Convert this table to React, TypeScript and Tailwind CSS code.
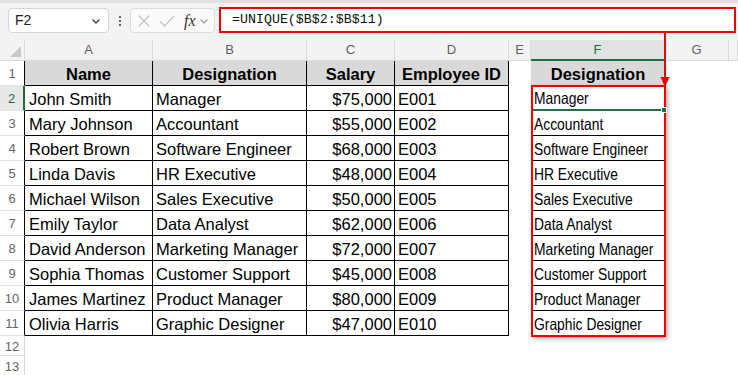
import React from "react";

const ROWS: [string, string, string, string][] = [
  ["John Smith", "Manager", "$75,000", "E001"],
  ["Mary Johnson", "Accountant", "$55,000", "E002"],
  ["Robert Brown", "Software Engineer", "$68,000", "E003"],
  ["Linda Davis", "HR Executive", "$48,000", "E004"],
  ["Michael Wilson", "Sales Executive", "$50,000", "E005"],
  ["Emily Taylor", "Data Analyst", "$62,000", "E006"],
  ["David Anderson", "Marketing Manager", "$72,000", "E007"],
  ["Sophia Thomas", "Customer Support", "$45,000", "E008"],
  ["James Martinez", "Product Manager", "$80,000", "E009"],
  ["Olivia Harris", "Graphic Designer", "$47,000", "E010"],
];

const COLS = "grid grid-cols-[25px_128px_154px_88px_114px_22px_134px_64px_1fr]";

function ColHeader({ label, active }: { label: string; active?: boolean }) {
  return (
    <div
      className={
        active
          ? "flex h-[21px] items-center justify-center border-b-2 border-r border-b-[#1e6e42] border-r-[#d4d4d4] bg-[#e3e3e3] text-[13px] text-[#1e6e42]"
          : "flex h-[21px] items-center justify-center border-r border-b border-[#dadada] text-[13px] text-[#5f5f5f]"
      }
    >
      {label}
    </div>
  );
}

function RowNum({
  n,
  table,
  active,
  short,
}: {
  n: number;
  table?: boolean;
  active?: boolean;
  short?: boolean;
}) {
  let cls = "flex items-center justify-center border-b border-b-[#e2e2e2] pt-[2px] text-[13px] ";
  cls += short ? "h-[20px] " : "h-[25px] ";
  if (active) cls += "border-r-2 border-r-[#1e6e42] text-[#1e6e42] bg-[#e8e8e8]";
  else if (table) cls += "border-r border-r-black text-[#666]";
  else cls += "border-r border-r-[#dadada] text-[#666]";
  return <div className={cls}>{n}</div>;
}

export default function App() {
  return (
    <div
      className="relative h-[375px] w-[738px] overflow-hidden bg-white text-black"
      style={{ fontFamily: '"Liberation Sans", Arial, sans-serif' }}
    >
      <div className="h-[3px] bg-[#e0e0e0]" />
      {/* formula bar */}
      <div className="flex h-[37px] items-start gap-0 bg-[#f3f3f3] pl-2 pt-[5px]">
        <div className="flex h-[25px] w-[101px] items-center justify-between rounded-[4px] border border-[#d6d6d6] bg-white pl-[6px] pr-[6px] text-[14px] text-[#222]">
          <span>F2</span>
          <svg width="12" height="12" viewBox="0 0 12 12" fill="none" stroke="#444" strokeWidth="1.4">
            <path d="M2.5 4.5 L6 8 L9.5 4.5" />
          </svg>
        </div>
        <div className="flex h-[25px] w-[21px] flex-col items-center justify-center gap-[2px]">
          <span className="h-[2px] w-[2px] rounded-full bg-[#333]" />
          <span className="h-[2px] w-[2px] rounded-full bg-[#333]" />
          <span className="h-[2px] w-[2px] rounded-full bg-[#333]" />
        </div>
        <div className="flex h-[25px] w-[85px] items-center rounded-[4px] border border-[#dcdcdc] bg-[#fafafa] pl-[6px]">
          <svg width="14" height="14" viewBox="0 0 14 14" fill="none" stroke="#c4c4c4" strokeWidth="1.3">
            <path d="M1.5 1.5 L12.5 12.5 M12.5 1.5 L1.5 12.5" />
          </svg>
          <svg className="ml-[8px]" width="16" height="14" viewBox="0 0 16 14" fill="none" stroke="#c4c4c4" strokeWidth="1.3">
            <path d="M1 7.5 L5.5 12 L15 2" />
          </svg>
          <span
            className="ml-[9px] text-[16px] italic text-[#333]"
            style={{ fontFamily: '"Liberation Serif", serif' }}
          >
            fx
          </span>
          <svg className="ml-[3px]" width="10" height="10" viewBox="0 0 10 10" fill="none" stroke="#999" strokeWidth="1.2">
            <path d="M1.5 3.5 L5 7 L8.5 3.5" />
          </svg>
        </div>
        <div className="ml-[4px] flex h-[26px] w-[517px] -translate-y-[1px] items-center border-2 border-[#f00000] bg-white pl-[11px]">
          <span
            className="text-[13.3px] text-[#111]"
            style={{ fontFamily: '"Liberation Mono", monospace' }}
          >
            =UNIQUE($B$2:$B$11)
          </span>
        </div>
      </div>

      {/* column headers */}
      <div className={COLS + " bg-[#f3f3f3]"}>
        <div className="relative h-[21px] border-r border-b border-[#dadada]">
          <div className="absolute bottom-[3px] right-[3px] h-0 w-0 border-b-[11px] border-l-[11px] border-b-[#c8c8c8] border-l-transparent" />
        </div>
        <ColHeader label="A" />
        <ColHeader label="B" />
        <ColHeader label="C" />
        <ColHeader label="D" />
        <ColHeader label="E" />
        <ColHeader label="F" active />
        <ColHeader label="G" />
        <ColHeader label="" />
      </div>

      {/* row 1 */}
      <div className={COLS + " text-[16.5px]"}>
        <RowNum n={1} table />
        {["Name", "Designation", "Salary", "Employee ID"].map((h) => (
          <div
            key={h}
            className="flex h-[25px] items-center justify-center border-r border-b border-black bg-[#d9d9d9] pt-[2px] font-bold"
          >
            {h}
          </div>
        ))}
        <div />
        <div className="flex h-[25px] items-center justify-center border-b border-black bg-[#d9d9d9] pt-[2px] font-bold">
          Designation
        </div>
        <div />
        <div />
      </div>

      {ROWS.map((r, i) => (
        <div key={r[3]} className={COLS + " text-[16.5px]"}>
          <RowNum n={i + 2} table active={i === 0} />
          <div className="flex h-[25px] items-center overflow-hidden whitespace-nowrap border-r border-b border-black pl-[4px] pt-[2px]">
            {r[0]}
          </div>
          <div className="flex h-[25px] items-center overflow-hidden whitespace-nowrap border-r border-b border-black pl-[3px] pt-[2px]">
            {r[1]}
          </div>
          <div className="flex h-[25px] items-center justify-end border-r border-b border-black pr-[2px] pt-[2px]">
            {r[2]}
          </div>
          <div className="flex h-[25px] items-center border-r border-b border-black pl-[3px] pt-[2px]">
            {r[3]}
          </div>
          <div />
          <div
            className={
              i === 0
                ? "flex h-[25px] items-center whitespace-nowrap border-b-2 border-[#1e6e42] pl-[3px] pt-[2px]"
                : "flex h-[25px] items-center whitespace-nowrap border-b border-black pl-[3px] pt-[2px]"
            }
          >
            <span className="inline-block origin-left scale-x-[0.84]">{r[1]}</span>
          </div>
          <div />
          <div />
        </div>
      ))}

      {[12, 13].map((n) => (
        <div key={n} className={COLS}>
          <RowNum n={n} short />
        </div>
      ))}

      {/* spill range outline */}
      <div className="pointer-events-none absolute left-[531px] top-[85px] h-[252px] w-[135px] border-2 border-[#f00000] shadow-[2px_2px_4px_rgba(0,0,0,0.3)]" />
      {/* active cell fill handle */}
      <div className="absolute left-[661px] top-[107px] h-[6px] w-[6px] border border-white bg-[#1e6e42]" />
      {/* arrow from formula to spill */}
      <svg className="pointer-events-none absolute left-[658px] top-[33px]" width="14" height="56" viewBox="0 0 14 56">
        <path d="M7 0 V46" stroke="#f00000" strokeWidth="2" />
        <path d="M2.5 44 L7 54 L11.5 44 Z" fill="#f00000" />
      </svg>
    </div>
  );
}
